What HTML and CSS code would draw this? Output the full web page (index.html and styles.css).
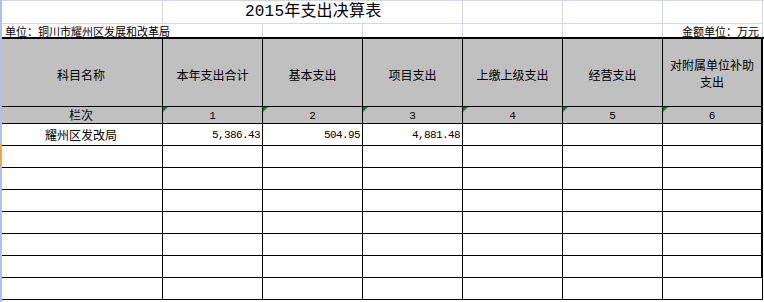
FILE: index.html
```html
<!DOCTYPE html>
<html lang="zh-CN">
<head>
<meta charset="utf-8">
<title>2015年支出决算表</title>
<link rel="stylesheet" href="styles.css">
</head>
<body>
<div class="sheet">
  <div class="top">
    <div class="g first r0"></div>
    <div class="g span3 r0 title">2015年支出决算表</div>
    <div class="g r0"></div>
    <div class="g r0"></div>
    <div class="g r0 last"></div>

    <div class="g first r1 unit">单位：铜川市耀州区发展和改革局</div>
    <div class="g r1"></div>
    <div class="g r1"></div>
    <div class="g r1"></div>
    <div class="g r1"></div>
    <div class="g r1"></div>
    <div class="g r1 last money">金额单位：万元</div>
  </div>

  <div class="table">
    <div class="c hd">科目名称</div>
    <div class="c hd">本年支出合计</div>
    <div class="c hd">基本支出</div>
    <div class="c hd">项目支出</div>
    <div class="c hd">上缴上级支出</div>
    <div class="c hd">经营支出</div>
    <div class="c hd last two">对附属单位补助<br>支出</div>

    <div class="c idx cn">栏次</div>
    <div class="c idx mark">1</div>
    <div class="c idx mark">2</div>
    <div class="c idx mark">3</div>
    <div class="c idx mark">4</div>
    <div class="c idx mark">5</div>
    <div class="c idx mark last">6</div>

    <div class="c name">耀州区发改局</div>
    <div class="c num">5,386.43</div>
    <div class="c num">504.95</div>
    <div class="c num">4,881.48</div>
    <div class="c"></div>
    <div class="c"></div>
    <div class="c last"></div>

    <div class="c"></div><div class="c"></div><div class="c"></div><div class="c"></div><div class="c"></div><div class="c"></div><div class="c last"></div>
    <div class="c"></div><div class="c"></div><div class="c"></div><div class="c"></div><div class="c"></div><div class="c"></div><div class="c last"></div>
    <div class="c"></div><div class="c"></div><div class="c"></div><div class="c"></div><div class="c"></div><div class="c"></div><div class="c last"></div>
    <div class="c"></div><div class="c"></div><div class="c"></div><div class="c"></div><div class="c"></div><div class="c"></div><div class="c last"></div>
    <div class="c"></div><div class="c"></div><div class="c"></div><div class="c"></div><div class="c"></div><div class="c"></div><div class="c last"></div>
    <div class="c"></div><div class="c"></div><div class="c"></div><div class="c"></div><div class="c"></div><div class="c"></div><div class="c last"></div>
    <div class="c"></div><div class="c"></div><div class="c"></div><div class="c"></div><div class="c"></div><div class="c"></div><div class="c last thin"></div>
  </div>

  <div class="rowbar"><div class="sel"></div></div>
</div>
</body>
</html>
```
FILE: styles.css
```css
html, body {
  margin: 0;
  padding: 0;
  background: #fff;
}

body {
  font-family: "Noto Sans CJK SC", "Noto Sans", sans-serif;
  color: #000;
  width: 764px;
  height: 302px;
  overflow: hidden;
}

.sheet {
  position: relative;
  width: 764px;
  height: 302px;
}

/* top, unbordered rows with spreadsheet gridlines */
.top {
  display: grid;
  grid-template-columns: 163px 100px 100px 100px 100px 100px 100px;
  grid-template-rows: 24px 12px;
  border-top: 1px solid #d0d7e5;
}

.g {
  box-sizing: border-box;
  border-right: 1px solid #d0d7e5;
  min-width: 0;
}

.r0 {
  border-bottom: 1px solid #d0d7e5;
  height: 23px;
}

.r1 {
  height: 12px;
}

.span3 {
  grid-column: span 3;
}

.title {
  font-family: "Liberation Mono", "Noto Sans CJK SC", monospace;
  font-size: 16px;
  line-height: 23px;
  padding-left: 82px;
  white-space: nowrap;
  letter-spacing: 0.2px;
}

.unit,
.money {
  font-size: 11px;
  line-height: 12px;
  white-space: nowrap;
  overflow: visible;
}

.unit {
  padding-left: 5px;
}

.money {
  text-align: right;
  padding-right: 3px;
}

/* bordered table */
.table {
  display: grid;
  grid-template-columns: 163px 100px 100px 100px 100px 100px 100px;
  grid-template-rows: 68px 17px repeat(8, 22px);
  border-top: 2px solid #000;
}

.c {
  box-sizing: border-box;
  border-right: 1px solid #000;
  border-bottom: 1px solid #000;
  display: flex;
  align-items: center;
  justify-content: center;
  font-size: 12px;
  min-width: 0;
  position: relative;
}

.c.last {
  border-right-width: 2px;
}

.c.last.thin {
  border-right-width: 1px;
  width: 100px;
}

.hd {
  background: #c0c0c0;
  text-align: center;
  padding-top: 3px;
  line-height: 17px;
}

.hd.two {
  padding-top: 0;
}

.idx {
  background: #c0c0c0;
  align-items: flex-end;
  font-family: "Liberation Mono", monospace;
  font-size: 11px;
  line-height: 14px;
}

.idx.cn {
  font-family: "Noto Sans CJK SC", sans-serif;
  font-size: 12px;
  line-height: 16px;
}

.mark::before {
  content: "";
  position: absolute;
  left: 0;
  top: 0;
  width: 0;
  height: 0;
  border-top: 5px solid #0e8a16;
  border-right: 5px solid transparent;
}

.name {
  font-size: 12px;
}

.num {
  justify-content: flex-end;
  padding-right: 2px;
  font-family: "Liberation Mono", monospace;
  font-size: 11px;
  letter-spacing: -0.6px;
}

/* left row-header edge */
.rowbar {
  position: absolute;
  left: 0;
  top: 0;
  width: 2px;
  height: 302px;
  background: #aac3e6;
  z-index: 2;
}

.sel {
  position: absolute;
  left: 0;
  top: 144px;
  width: 2px;
  height: 22px;
  background: #f7a63f;
}
```
